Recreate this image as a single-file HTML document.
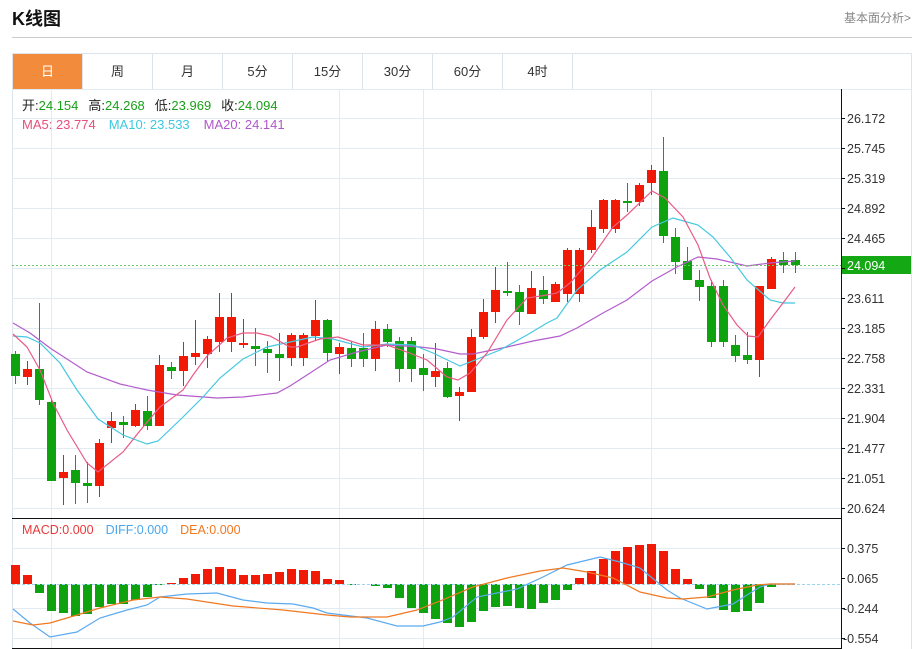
<!DOCTYPE html>
<html><head><meta charset="utf-8"><style>
body{margin:0;width:923px;height:649px;background:#fff;overflow:hidden;font-family:"Liberation Sans","Noto Sans CJK SC",sans-serif;}
.t{position:absolute;left:12px;top:5px;font-size:18px;font-weight:bold;color:#111;}
.r{position:absolute;right:12px;top:9px;font-size:12px;color:#888;}
.hl{position:absolute;left:12px;top:37px;width:900px;height:1px;background:#ccc;}
.tabs{position:absolute;left:12px;top:53px;width:898px;height:35px;border:1px solid #dde3ea;}
.tab{position:absolute;top:0;width:69px;height:35px;border-right:1px solid #dde3ea;text-align:center;line-height:35px;font-size:13px;color:#333;}
svg{position:absolute;left:0;top:0;}
</style></head><body>
<div class="t">K线图</div>
<div class="r">基本面分析&gt;</div>
<div class="hl"></div>
<div class="tabs">
<div class="tab" style="left:0;background:#f28c3c;color:#fff;">日</div>
<div class="tab" style="left:70px">周</div>
<div class="tab" style="left:140px">月</div>
<div class="tab" style="left:210px">5分</div>
<div class="tab" style="left:280px">15分</div>
<div class="tab" style="left:350px">30分</div>
<div class="tab" style="left:420px">60分</div>
<div class="tab" style="left:490px">4时</div>
</div>
<svg id="s" width="923" height="649" xmlns="http://www.w3.org/2000/svg" font-family="Liberation Sans, Noto Sans CJK SC, sans-serif">
<g id="grid" stroke="#e3ebf2" stroke-width="1"></g>
<line x1="12.5" y1="89" x2="12.5" y2="649" stroke="#dde3ea"/>
<line x1="911.5" y1="89" x2="911.5" y2="649" stroke="#dde3ea"/>
<line x1="12" y1="518.5" x2="841" y2="518.5" stroke="#111"/>
<line x1="12" y1="648.5" x2="841" y2="648.5" stroke="#111"/>
<line x1="841.5" y1="89" x2="841.5" y2="649" stroke="#111"/>
<g id="c"></g>
<line x1="12" y1="265.5" x2="841" y2="265.5" stroke="#6cc66c" stroke-dasharray="2,2"/>
<rect x="842" y="256" width="69" height="18" fill="#14a814"/>
<text x="847" y="270" font-size="12.5" fill="#fff">24.094</text>
<g id="ax" font-size="12.5" fill="#333"></g>
<text x="22" y="110" font-size="13" fill="#222">开:<tspan fill="#18a018">24.154</tspan><tspan dx="10">高:</tspan><tspan fill="#18a018">24.268</tspan><tspan dx="10">低:</tspan><tspan fill="#18a018">23.969</tspan><tspan dx="10">收:</tspan><tspan fill="#18a018">24.094</tspan></text>
<text x="22" y="129" font-size="13" fill="#e84f7d">MA5: 23.774<tspan fill="#3cc8e0" dx="13">MA10: 23.533</tspan><tspan fill="#b157c9" dx="14">MA20: 24.141</tspan></text>
<text x="22" y="534" font-size="12.5" fill="#e8393a">MACD:0.000<tspan fill="#4aa6ee" dx="12">DIFF:0.000</tspan><tspan fill="#f07820" dx="12">DEA:0.000</tspan></text>
</svg>
<script>
var NS="http://www.w3.org/2000/svg";
function el(p,t,a){var e=document.createElementNS(NS,t);for(var k in a)e.setAttribute(k,a[k]);p.appendChild(e);return e;}
var g=document.getElementById('grid'),c=document.getElementById('c'),ax=document.getElementById('ax');
for(var y=118;y<=508;y+=30)el(g,'line',{x1:12,x2:841,y1:y+.5,y2:y+.5});
[548,608,638].forEach(function(y){el(g,'line',{x1:12,x2:841,y1:y+.5,y2:y+.5});});
[51,339,423,651].forEach(function(x){el(g,'line',{x1:x+.5,x2:x+.5,y1:89,y2:648});});
el(g,'line',{x1:12,x2:911,y1:89.5,y2:89.5});
var labs=["26.172","25.745","25.319","24.892","24.465","","23.611","23.185","22.758","22.331","21.904","21.477","21.051","20.624"];
labs.forEach(function(l,i){var y=118+i*30;if(l){el(ax,'text',{x:847,y:y+5}).textContent=l;}el(ax,'line',{x1:841,x2:845,y1:y+.5,y2:y+.5,stroke:'#111'});});
[["0.375",548],["0.065",578],["-0.244",608],["-0.554",638]].forEach(function(a){el(ax,'text',{x:a[0][0]=='-'?843:847,y:a[1]+5}).textContent=a[0];el(ax,'line',{x1:841,x2:845,y1:a[1]+.5,y2:a[1]+.5,stroke:'#111'});});
var D=[[354,376,351,384,'g'],[369,377,361,385,'r'],[369,400,303,405,'g'],[402,481,399,481,'g'],[472,478,455,505,'r'],[470,483,455,504,'g'],[483,486,462,503,'g'],[443,486,439,497,'r'],[421,428,412,443,'r'],[422,425,416,438,'g'],[410,426,404,427,'r'],[411,426,396,430,'g'],[365,426,355,426,'r'],[367,371,362,379,'g'],[356,371,342,386,'r'],[353,357,320,365,'r'],[339,354,336,368,'r'],[317,342,293,352,'r'],[317,342,293,352,'r'],[343,345,319,348,'r'],[346,349,328,366,'g'],[349,353,341,373,'g'],[354,358,333,381,'g'],[335,358,333,366,'r'],[335,358,333,366,'r'],[320,336,300,340,'r'],[320,353,319,361,'g'],[347,354,343,374,'r'],[348,359,342,367,'g'],[348,359,333,367,'g'],[329,359,321,371,'r'],[329,342,324,347,'g'],[341,369,337,382,'g'],[341,369,337,382,'g'],[368,375,354,391,'g'],[371,377,343,387,'r'],[368,397,362,398,'g'],[392,396,387,421,'r'],[337,392,329,392,'r'],[312,337,299,339,'r'],[290,312,267,323,'r'],[291,293,262,296,'g'],[292,312,285,325,'g'],[288,314,271,314,'r'],[290,299,276,304,'g'],[284,302,282,302,'r'],[250,294,248,302,'r'],[250,294,248,302,'r'],[227,250,210,253,'r'],[200,229,199,233,'r'],[200,229,199,233,'r'],[201,203,183,212,'g'],[185,202,183,206,'r'],[170,183,165,195,'r'],[171,236,137,243,'g'],[237,262,228,274,'g'],[261,280,247,280,'g'],[280,287,270,301,'g'],[286,342,280,347,'g'],[286,342,280,347,'g'],[345,356,335,362,'g'],[355,360,332,364,'g'],[286,360,286,377,'r'],[259,289,257,289,'r'],[260,265,252,273,'g'],[260,265,252,273,'g']];
D.forEach(function(d,i){var x=15+12*i,col=d[4]=='r'?'#f01a06':'#0ea30e';
el(c,'line',{x1:x+.5,x2:x+.5,y1:d[2],y2:d[3],stroke:col});
el(c,'rect',{x:x-4,y:d[0],width:9,height:Math.max(2,d[1]-d[0]),fill:col});});
function pl(pts,col){el(c,'polyline',{points:pts,fill:'none',stroke:col,'stroke-width':1.2});}
pl("13,323 30,333 50,348 87,372 120,384 147,390 177,395 217,398 243,397 277,393 290,386 307,375 330,360 357,352 387,345 420,347 437,349 460,354 473,354 507,347 533,341 560,336 577,328 603,313 627,300 652,281 677,267 698,257 717,259 747,266 770,263 795,261","#b35ccc");
pl("13,336 27,337 40,343 60,363 77,390 98,419 123,435 147,444 158,441 183,417 203,397 220,378 243,359 267,347 290,342 313,337 333,339 363,347 387,344 413,345 433,353 460,366 480,358 500,350 527,335 547,323 557,318 577,290 600,270 627,252 652,227 673,218 698,225 713,237 730,257 747,280 770,300 783,303 795,303","#45c8e0");
pl("13,334 27,347 40,370 53,403 67,430 87,463 98,472 123,452 143,427 160,407 183,390 193,375 207,356 227,338 243,333 257,333 270,336 290,347 297,347 320,339 338,337 363,345 387,345 407,352 427,360 447,377 458,380 470,373 487,353 507,320 527,298 547,295 557,293 570,283 590,260 613,227 627,215 652,191 665,198 683,217 698,245 710,278 723,305 737,325 748,336 758,337 770,320 783,303 795,287","#ea5a85");
var M=[565,575,593,611,613,616,614,607,604,604,600,597,585,583,578,574,569,567,569,575,575,574,572,569,570,571,579,580,585,584,586,588,598,608,613,619,623,627,622,611,607,606,608,609,603,600,590,578,571,559,551,547,545,544,551,569,579,589,598,610,612,611,603,587];
M.forEach(function(v,i){var x=15+12*i,z=584;if(Math.abs(v-z)<1)return;var col=v<z?'#f01a06':'#0ea30e';el(c,'rect',{x:x-4,y:Math.min(v,z),width:9,height:Math.abs(v-z),fill:col});});
el(c,'line',{x1:12,x2:841,y1:584.5,y2:584.5,stroke:'#9ad4f0','stroke-dasharray':'3,2'});
pl("13,609 30,623 50,637 77,632 100,618 127,610 147,605 160,597 187,594 217,593 243,600 267,603 293,604 313,608 327,613 367,618 397,626 423,626 440,622 453,617 477,597 517,589 543,577 567,565 600,557 620,562 640,568 667,590 680,598 707,609 733,604 747,595 760,587 770,584 795,584","#5aaaf0");
pl("13,621 33,625 50,623 77,615 100,608 133,600 160,597 187,599 233,606 283,610 327,615 350,617 387,617 417,610 440,601 473,587 507,578 540,571 563,568 587,572 613,578 640,592 667,598 683,599 707,597 733,590 757,585 770,584 795,584","#f07820");
</script>
</body></html>
